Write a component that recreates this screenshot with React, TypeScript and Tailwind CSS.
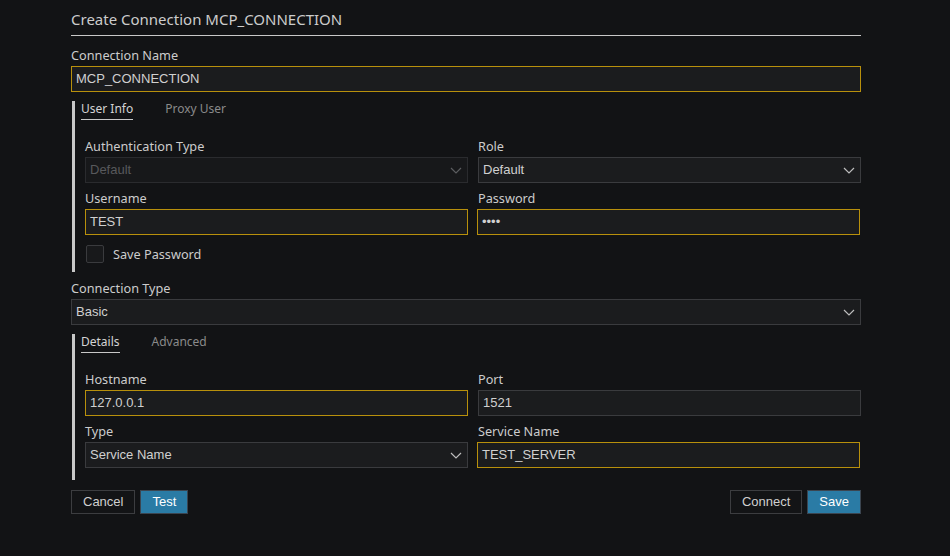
import type { ReactNode } from "react";

type Tab = { label: string; active?: boolean };

function Label({ children }: { children: ReactNode }) {
  return (
    <div className="mb-[2px] text-[12.7px] leading-[18px] text-[#cccccc]">
      {children}
    </div>
  );
}

function TextBox({
  value,
  focused = false,
}: {
  value: string;
  focused?: boolean;
}) {
  return (
    <div
      className={`flex h-[26px] items-center border bg-[#1b1c1e] pl-[4px] font-['Liberation_Sans',Arial,sans-serif] text-[13px] text-[#d0d0d0] ${
        focused ? "border-[#b8900c]" : "border-[#3a3b3e]"
      }`}
    >
      {value}
    </div>
  );
}

function Chevron({ dim = false }: { dim?: boolean }) {
  return (
    <svg width="12" height="7" viewBox="0 0 12 7" fill="none">
      <path
        d="M1 1l5 5 5-5"
        stroke={dim ? "#5c5d60" : "#bdbdbd"}
        strokeWidth="1.2"
      />
    </svg>
  );
}

function Select({ value, disabled = false }: { value: string; disabled?: boolean }) {
  return (
    <div
      className={`flex h-[26px] items-center justify-between border pl-[4px] pr-[5px] font-['Liberation_Sans',Arial,sans-serif] text-[13px] ${
        disabled
          ? "border-[#2a2b2e] bg-[#17181a] text-[#58595c]"
          : "border-[#3a3b3e] bg-[#1b1c1e] text-[#d0d0d0]"
      }`}
    >
      <span>{value}</span>
      <Chevron dim={disabled} />
    </div>
  );
}

function Field({ label, children }: { label: string; children: ReactNode }) {
  return (
    <div>
      <Label>{label}</Label>
      {children}
    </div>
  );
}

function Section({
  tabs,
  children,
  className = "",
}: {
  tabs: Tab[];
  children: ReactNode;
  className?: string;
}) {
  return (
    <div className={`ml-px border-l-[3px] border-[#c8c8c8] ${className}`}>
      <div className="flex gap-[32px] pl-[6px] text-[12px] leading-[16px]">
        {tabs.map((t) => (
          <div
            key={t.label}
            className={
              t.active
                ? "border-b border-[#c8c8c8] pb-[2px] text-[#d4d4d4]"
                : "pb-[2px] text-[#8a8a8a]"
            }
          >
            {t.label}
          </div>
        ))}
      </div>
      <div className="mt-[17px] pl-[10px]">{children}</div>
    </div>
  );
}

function Button({
  children,
  primary = false,
}: {
  children: ReactNode;
  primary?: boolean;
}) {
  return (
    <button
      className={`h-[24px] border px-[11px] font-['Liberation_Sans',Arial,sans-serif] text-[13px] ${
        primary
          ? "border-[#3b4550] bg-[#2a7ba5] text-white"
          : "border-[#3c3d40] bg-[#131416] text-[#d0d0d0]"
      }`}
    >
      {children}
    </button>
  );
}

export default function App() {
  return (
    <div className="min-h-screen bg-[#121315] font-['Noto_Sans',sans-serif] text-[#cccccc]">
      <div className="ml-[71px] w-[790px] pt-[9px]">
        <h1 className="border-b border-[#c8c8c8] pb-[6px] text-[15px] leading-[20px] text-[#cccccc]">
          Create Connection MCP_CONNECTION
        </h1>

        <div className="mt-[10px]">
          <Label>Connection Name</Label>
          <TextBox value="MCP_CONNECTION" focused />
        </div>

        <Section
          className="mt-[9px] pb-[9px]"
          tabs={[{ label: "User Info", active: true }, { label: "Proxy User" }]}
        >
          <div className="grid grid-cols-2 gap-x-[10px] gap-y-[6px]">
            <Field label="Authentication Type">
              <Select value="Default" disabled />
            </Field>
            <Field label="Role">
              <Select value="Default" />
            </Field>
            <Field label="Username">
              <TextBox value="TEST" focused />
            </Field>
            <Field label="Password">
              <div className="-ml-px mr-px">
                <TextBox value="••••" focused />
              </div>
            </Field>
          </div>
          <div className="ml-px mt-[10px] flex items-center gap-[9px]">
            <div className="h-[18px] w-[18px] rounded-[2px] border border-[#3a3b3e] bg-[#18191b]" />
            <span className="text-[12.7px] leading-[18px] text-[#cccccc]">
              Save Password
            </span>
          </div>
        </Section>

        <div className="mt-[7px]">
          <Label>Connection Type</Label>
          <Select value="Basic" />
        </div>

        <Section
          className="mt-[9px] pb-[12px]"
          tabs={[{ label: "Details", active: true }, { label: "Advanced" }]}
        >
          <div className="grid grid-cols-2 gap-x-[10px] gap-y-[6px]">
            <Field label="Hostname">
              <TextBox value="127.0.0.1" focused />
            </Field>
            <Field label="Port">
              <TextBox value="1521" />
            </Field>
            <Field label="Type">
              <Select value="Service Name" />
            </Field>
            <Field label="Service Name">
              <div className="-ml-px mr-px">
                <TextBox value="TEST_SERVER" focused />
              </div>
            </Field>
          </div>
        </Section>

        <div className="mt-[10px] flex justify-between">
          <div className="flex gap-[5px]">
            <Button>Cancel</Button>
            <Button primary>Test</Button>
          </div>
          <div className="flex gap-[5px]">
            <Button>Connect</Button>
            <Button primary>Save</Button>
          </div>
        </div>
      </div>
    </div>
  );
}
